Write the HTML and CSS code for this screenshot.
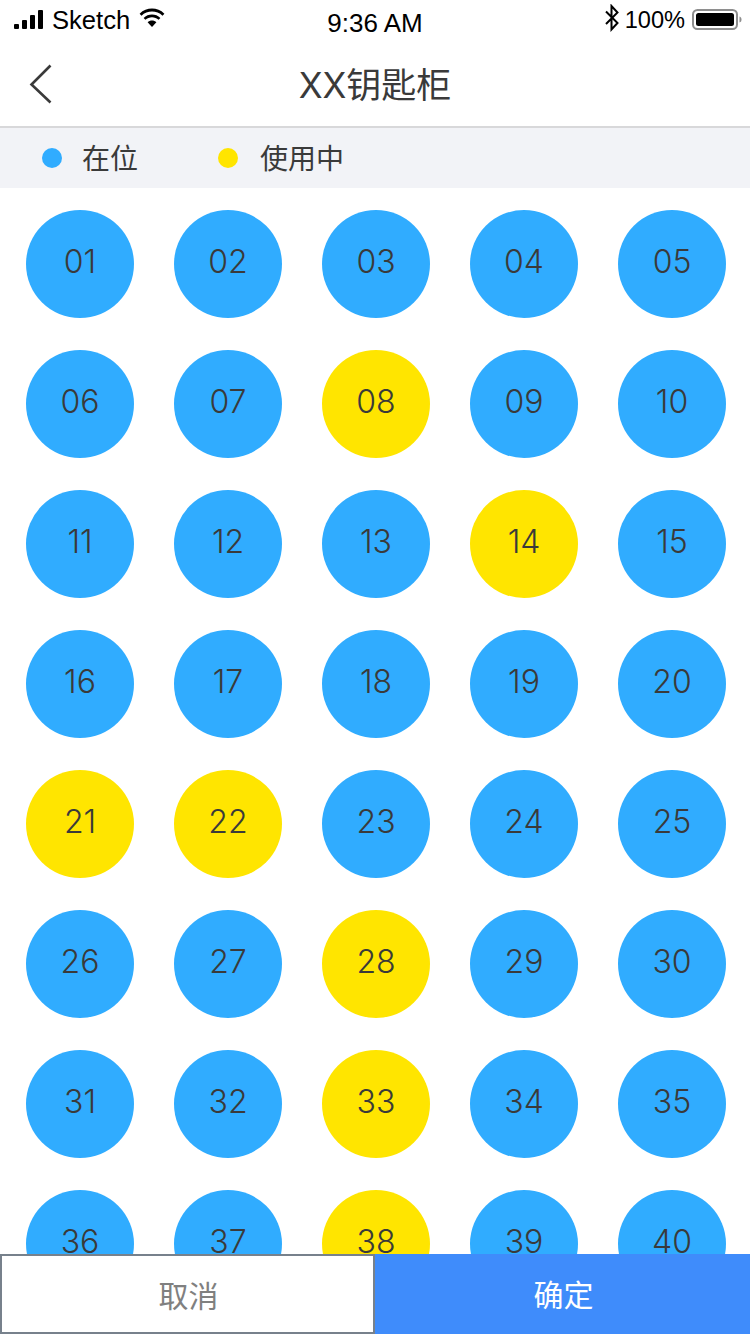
FILE: index.html
```html
<!doctype html>
<html lang="zh-CN">
  <head>
    <meta charset="UTF-8" />
    <meta name="viewport" content="width=device-width, initial-scale=1.0" />
    <title>XX钥匙柜</title>
    <link rel="stylesheet" href="styles.css">
  </head>
  <body>
    <div class="page">
      <div class="status-bar">
        <div class="status-left">
          <svg class="signal" width="30" height="20" viewBox="0 0 30 20">
            <rect x="0" y="14" width="5" height="5" rx="1" />
            <rect x="8" y="10" width="5" height="9" rx="1" />
            <rect x="16" y="5" width="5" height="14" rx="1" />
            <rect x="24" y="0" width="5" height="19" rx="1" />
          </svg>
          <span class="carrier">Sketch</span>
          <svg class="wifi" width="26" height="20" viewBox="0 0 26 20">
            <path d="M13 19 L8.6 14.2 C11 11.9 15 11.9 17.4 14.2 Z" />
            <path d="M6.4 11.8 C10 8.3 16 8.3 19.6 11.8 L21.4 9.9 C16.8 5.3 9.2 5.3 4.6 9.9 Z" />
            <path d="M2.5 7.7 C8.2 2.2 17.8 2.2 23.5 7.7 L25.4 5.7 C18.4 -1.1 7.6 -1.1 0.6 5.7 Z" />
          </svg>
        </div>
        <div class="status-time">9:36 AM</div>
        <div class="status-right">
          <svg class="bluetooth" width="16" height="28" viewBox="0 0 16 28">
            <path d="M2 7.5 L13.5 19 L7.5 25.5 L7.5 2 L13.5 8.5 L2 20" fill="none" stroke="#000" stroke-width="2" />
          </svg>
          <span class="battery-pct">100%</span>
          <svg class="battery" width="50" height="22" viewBox="0 0 50 22">
            <rect x="1" y="1" width="44" height="19" rx="4.5" fill="none" stroke="#8e8e8e" stroke-width="2" />
            <rect x="4" y="4" width="38" height="13" rx="2.5" fill="#000" />
            <path d="M47.5 7.5 C49 8 49.5 9 49.5 10.5 C49.5 12 49 13 47.5 13.5 Z" fill="#8e8e8e" />
          </svg>
        </div>
      </div>

      <div class="nav-bar">
        <svg class="back" width="24" height="40" viewBox="0 0 24 40">
          <path d="M21.5 1.5 L2.5 20.5 L21.5 38.5" fill="none" stroke="#3a3a3a" stroke-width="2.6" />
        </svg>
        <h1 class="nav-title">XX钥匙柜</h1>
      </div>

      <div class="legend">
        <div class="legend-item legend-free"><i class="dot dot-free"></i><span class="legend-label">在位</span></div>
        <div class="legend-item"><i class="dot dot-used"></i><span class="legend-label">使用中</span></div>
      </div>

      <div class="key-grid" id="keyGrid"></div>

      <div class="actions">
        <button class="btn btn-cancel">取消</button>
        <button class="btn btn-ok">确定</button>
      </div>
    </div>

    <script>
      // keys that are currently taken out
      const used = [8, 14, 21, 22, 28, 33, 38];
      const grid = document.getElementById('keyGrid');

      for (let i = 1; i <= 40; i++) {
        const key = document.createElement('div');
        key.className = used.includes(i) ? 'key key-used' : 'key';
        key.textContent = String(i).padStart(2, '0');
        grid.appendChild(key);
      }
    </script>
  </body>
</html>
```

FILE: styles.css
```css
html,
body {
  margin: 0;
  padding: 0;
  background: #fff;
}
.page {
  position: relative;
  width: 750px;
  height: 1334px;
  overflow: hidden;
  font-family: "Inter", "Noto Sans CJK SC", sans-serif;
  color: #3a3a3a;
}
.status-bar {
  display: flex;
  justify-content: space-between;
  align-items: center;
  height: 40px;
  padding: 0 8px 0 14px;
  font-family: "Liberation Sans", sans-serif;
  font-size: 24px;
  color: #000;
}
.status-left,
.status-right {
  display: flex;
  align-items: center;
  width: 200px;
}
.status-right {
  justify-content: flex-end;
}
.signal {
  fill: #000;
  margin-top: -1px;
}
.carrier {
  margin-left: 8px;
  font-size: 25.6px;
}
.wifi {
  fill: #000;
  margin-left: 9px;
  margin-top: -4px;
}
.status-time {
  margin-top: 7px;
  margin-right: 6px;
  font-size: 26px;
}
.bluetooth {
  margin-right: 5px;
  margin-top: -4px;
}
.battery-pct {
  margin-right: 7px;
  font-size: 23.6px;
  margin-top: 1px;
}
.battery {
  margin-top: -1px;
}
.nav-bar {
  position: relative;
  display: flex;
  align-items: center;
  justify-content: center;
  height: 86px;
  box-sizing: content-box;
  border-bottom: 2px solid #d8d8da;
}
.back {
  position: absolute;
  left: 29px;
  top: 24px;
}
.nav-title {
  margin: 0;
  padding-top: 5px;
  font-size: 35px;
  font-weight: 400;
  line-height: 81px;
}
.legend {
  display: flex;
  align-items: center;
  height: 60px;
  padding-left: 42px;
  background: #f2f3f7;
  font-size: 28px;
}
.legend-item {
  display: flex;
  align-items: center;
}
.legend-label {
  padding-top: 2px;
  line-height: 58px;
}
.legend-free {
  width: 176px;
}
.dot {
  width: 20px;
  height: 20px;
  border-radius: 50%;
  margin-right: 20px;
}
.dot-free {
  background: #30acff;
}
.dot-used {
  background: #ffe500;
  margin-right: 22px;
}
.key-grid {
  display: grid;
  grid-template-columns: repeat(5, 108px);
  column-gap: 40px;
  row-gap: 32px;
  padding: 22px 0 0 26px;
}
.key {
  width: 108px;
  height: 108px;
  border-radius: 50%;
  background: #30acff;
  font-size: 32px;
  font-weight: 350;
  line-height: 104px;
  text-align: center;
}
.key-used {
  background: #ffe500;
}
.actions {
  position: absolute;
  left: 0;
  right: 0;
  bottom: 0;
  display: flex;
  height: 80px;
}
.btn {
  flex: 1;
  margin: 0;
  border: none;
  font-family: "Noto Sans CJK SC", sans-serif;
  font-size: 30px;
}
.btn-cancel {
  box-sizing: border-box;
  flex: 0 0 375px;
  padding: 0 0 0 2px;
  background: #fff;
  border: 2px solid #77818c;
  color: #808080;
}
.btn-ok {
  padding: 0 0 2px 2px;
  background: #3f8cfb;
  color: #fff;
}
```
